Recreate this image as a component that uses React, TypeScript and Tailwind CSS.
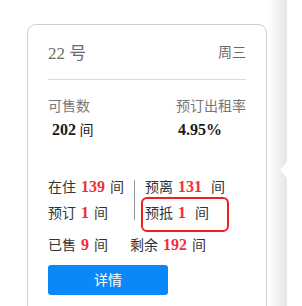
import React from "react";

const font = { fontFamily: '"Liberation Serif", "Noto Sans CJK SC", serif' };

function Num({ children, extra = "" }: { children: React.ReactNode; extra?: string }) {
  return <span className={`text-[16px] font-bold text-[#ef2f35] mx-[5px] ${extra}`}>{children}</span>;
}

export default function App() {
  return (
    <div className="w-[302px] h-[306px] overflow-hidden bg-white flex" style={font}>
      <div className="w-[27px] shrink-0" />
      <div className="relative mt-[24px] w-[240px] h-[300px] shrink-0 border border-[#cfcfcf] rounded-[9px] px-[20px] bg-white">
        <div className="h-[55px] pt-[4px] flex items-center justify-between border-b border-[#d9d9d9]">
          <span className="text-[17px] text-[#6b6b6b] leading-[20px]">22 号</span>
          <span className="text-[14px] text-[#6b6b6b] leading-[20px] -mt-[2px]">周三</span>
        </div>

        <div className="mt-[17px] flex justify-between">
          <div className="flex flex-col">
            <span className="text-[14px] leading-[20px] text-[#777]">可售数</span>
            <span className="mt-[3px] pl-[4px] leading-[20px] text-[#1a1a1a]">
              <span className="text-[16px] font-bold">202</span>
              <span className="text-[14px]"> 间</span>
            </span>
          </div>
          <div className="flex flex-col">
            <span className="text-[14px] leading-[20px] text-[#777]">预订出租率</span>
            <span className="mt-[3px] pl-[2px] leading-[20px] text-[16px] font-bold text-[#1a1a1a]">4.95%</span>
          </div>
        </div>

        <div className="mt-[33px] flex text-[14px] text-[#333]">
          <div className="w-[86px] flex flex-col">
            <div className="h-[26px] flex items-center">在住<Num>139</Num>间</div>
            <div className="h-[26px] flex items-center">预订<Num>1</Num>间</div>
          </div>
          <div className="w-px bg-[#999] my-[6px]" />
          <div className="pl-[10px] flex flex-col">
            <div className="h-[26px] flex items-center">预离<Num extra="mr-[9px]">131</Num>间</div>
            <div className="h-[26px] flex items-center">预抵<Num extra="mr-[9px]">1</Num>间</div>
          </div>
        </div>

        <div className="mt-[6px] h-[26px] flex items-center text-[14px] text-[#333]">
          <div className="w-[82px] flex items-center">已售<Num>9</Num>间</div>
          <div className="flex items-center">剩余<Num>192</Num>间</div>
        </div>

        <button className="mt-[7px] w-[120px] h-[30px] rounded-[3px] bg-[#0a88f8] text-white text-[14px] flex items-center justify-center">
          详情
        </button>

        <div className="absolute left-[113px] top-[172px] w-[88px] h-[35px] border-2 border-[#f01e1e] rounded-[6px]" />
      </div>
      <div className="relative w-[20px] shrink-0 h-full bg-gradient-to-r from-white to-[#e6e6e6]">
        <div className="absolute right-0 top-[162px] w-0 h-0 border-y-[8px] border-y-transparent border-r-[7px] border-r-white" />
      </div>
      <div className="flex-1 bg-white" />
    </div>
  );
}
